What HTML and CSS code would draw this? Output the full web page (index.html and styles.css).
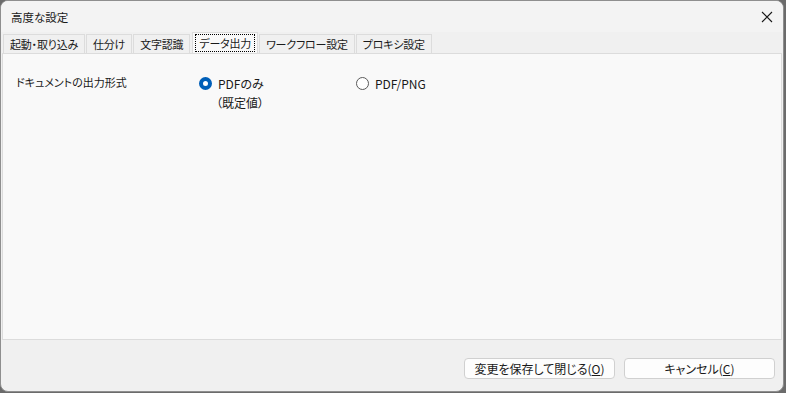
FILE: index.html
```html
<!DOCTYPE html>
<html lang="ja">
<head>
  <meta charset="UTF-8">
  <title>高度な設定</title>
  <link rel="stylesheet" href="styles.css">
</head>
<body>
  <div class="window">
    <div class="titlebar">
      <span class="title">高度な設定</span>
      <span class="close">
        <svg width="12" height="12" viewBox="0 0 12 12"><path d="M1 1 L11 11 M11 1 L1 11" stroke="#1a1a1a" stroke-width="1.1" fill="none"/></svg>
      </span>
    </div>

    <div class="tabs">
      <div class="tab">起動・取り込み</div>
      <div class="tab">仕分け</div>
      <div class="tab">文字認識</div>
      <div class="tab active"><span class="focus">データ出力</span></div>
      <div class="tab">ワークフロー設定</div>
      <div class="tab">プロキシ設定</div>
    </div>

    <div class="panel">
      <div class="row">
        <div class="label">ドキュメントの出力形式</div>
        <div class="option">
          <span class="radio checked"></span>
          <div class="opt-text">
            <div>PDFのみ</div>
            <div class="sub">（既定値）</div>
          </div>
        </div>
        <div class="option">
          <span class="radio"></span>
          <div class="opt-text">
            <div>PDF/PNG</div>
          </div>
        </div>
      </div>
    </div>

    <div class="footer">
      <button class="btn save">変更を保存して閉じる(<u>O</u>)</button>
      <button class="btn cancel">キャンセル(<u>C</u>)</button>
    </div>
  </div>
</body>
</html>
```

FILE: styles.css
```css
body, html {
  margin: 0;
  padding: 0;
  height: 100%;
}
body {
  background-color: #6b6b6b;
  font-family: "Noto Sans CJK JP", "Noto Sans", sans-serif;
  font-feature-settings: "palt";
  font-size: 12px;
  color: #1a1a1a;
}

.window {
  width: 782px;
  height: 390px;
  background-color: #f0f0f0;
  border: 1px solid #8e8e8e;
  border-radius: 8px;
  display: flex;
  flex-direction: column;
  overflow: hidden;
}

.titlebar {
  height: 31px;
  display: flex;
  align-items: center;
  justify-content: space-between;
  background-color: #f3f3f3;
  padding-left: 10px;
  padding-right: 10px;
}

.title {
  font-size: 11.5px;
}

.close {
  display: flex;
  width: 12px;
  height: 12px;
}

.tabs {
  display: flex;
  align-items: flex-end;
  height: 21px;
  padding-left: 2px;
  position: relative;
  z-index: 1;
  font-size: 11px;
}

.tab {
  height: 19px;
  line-height: 18px;
  padding: 0 6px;
  border: 1px solid #dcdcdc;
  border-bottom: none;
  background-color: #f0f0f0;
  box-sizing: border-box;
  margin-right: 1px;
  letter-spacing: -0.2px;
}

.tab.active {
  height: 21px;
  background-color: #f9f9f9;
  padding: 1px 2px 0;
  margin: 0 1px 0 1px;
}

.focus {
  display: inline-block;
  border: 1px dotted #000;
  line-height: 16px;
  padding: 0 3px;
}

.panel {
  flex: 1;
  margin: 0 1px 0 1px;
  background-color: #f9f9f9;
  border: 1px solid #dcdcdc;
}

.row {
  display: flex;
  padding: 20px 0 0 13px;
}

.label {
  width: 183px;
  font-size: 11px;
}

.option {
  display: flex;
  width: 157px;
}

.opt-text {
  line-height: 19px;
}

.sub {
  margin-left: -2px;
}

.radio {
  width: 11px;
  height: 11px;
  border: 1px solid #5a5a5a;
  border-radius: 50%;
  background-color: #fff;
  margin: 3px 6px 0 0;
  box-sizing: content-box;
}

.radio.checked {
  width: 5px;
  height: 5px;
  border: 4px solid #005fb8;
}

.footer {
  height: 51px;
  display: flex;
  align-items: center;
  justify-content: flex-end;
  gap: 9px;
  padding-right: 8px;
  padding-top: 5px;
  box-sizing: border-box;
}

.btn {
  width: 151px;
  height: 21px;
  font-family: inherit;
  font-feature-settings: "palt";
  font-size: 12px;
  color: #1a1a1a;
  background-color: #fdfdfd;
  border: 1px solid #d0d0d0;
  border-radius: 4px;
  padding: 0;
}
```
